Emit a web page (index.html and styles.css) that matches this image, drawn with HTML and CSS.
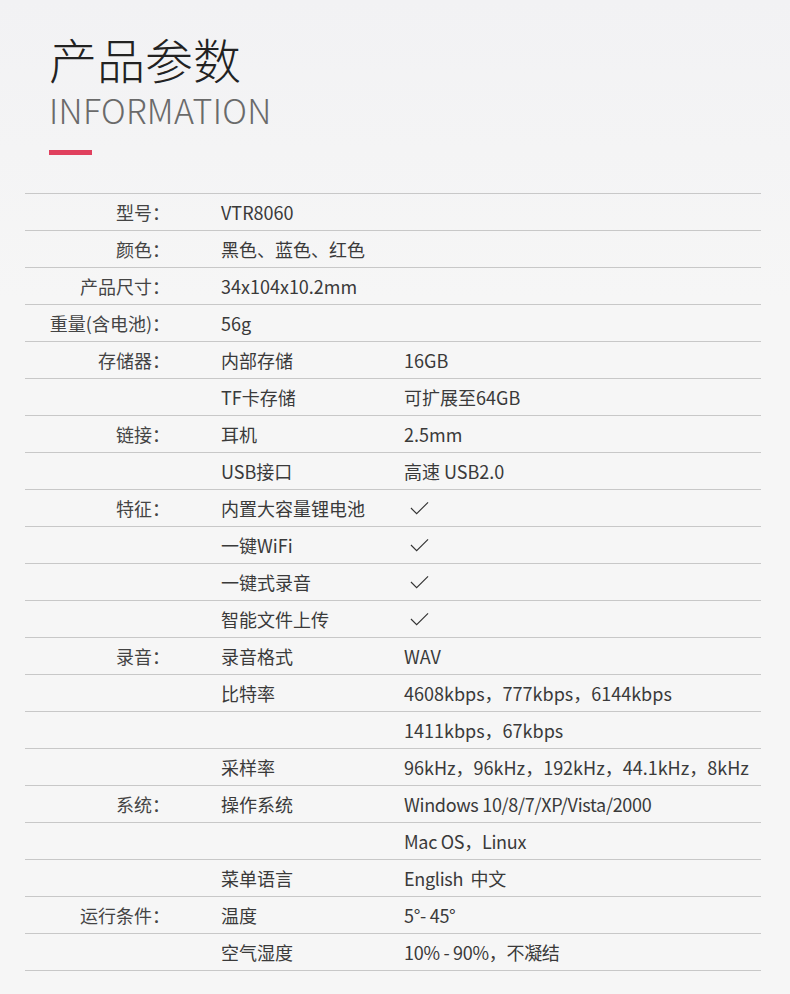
FILE: index.html
```html
<!DOCTYPE html>
<html lang="zh">
    <head>
        <meta charset="UTF-8" />
        <meta name="viewport" content="width=device-width, initial-scale=1.0" />
        <title>产品参数</title>
        <link rel="stylesheet" href="styles.css">
    </head>
    <body>
        <div class="page">
            <div class="head">
                <h1 class="title">产品参数</h1>
                <p class="subtitle">INFORMATION</p>
                <div class="bar"></div>
            </div>

            <div class="spec">
                <div class="row"><span class="label">型号：</span><span class="wide">VTR8060</span></div>
                <div class="row"><span class="label">颜色：</span><span class="wide">黑色、蓝色、红色</span></div>
                <div class="row"><span class="label">产品尺寸：</span><span class="wide">34x104x10.2mm</span></div>
                <div class="row"><span class="label">重量(含电池)：</span><span class="wide">56g</span></div>

                <div class="row"><span class="label">存储器：</span><span class="name">内部存储</span><span class="val">16GB</span></div>
                <div class="row"><span class="label"></span><span class="name">TF卡存储</span><span class="val">可扩展至64GB</span></div>

                <div class="row"><span class="label">链接：</span><span class="name">耳机</span><span class="val">2.5mm</span></div>
                <div class="row"><span class="label"></span><span class="name">USB接口</span><span class="val">高速 USB2.0</span></div>

                <div class="row"><span class="label">特征：</span><span class="name">内置大容量锂电池</span><span class="val"><svg class="check" viewBox="0 0 20 14"><polyline points="1,7 7,13 19,1" /></svg></span></div>
                <div class="row"><span class="label"></span><span class="name">一键WiFi</span><span class="val"><svg class="check" viewBox="0 0 20 14"><polyline points="1,7 7,13 19,1" /></svg></span></div>
                <div class="row"><span class="label"></span><span class="name">一键式录音</span><span class="val"><svg class="check" viewBox="0 0 20 14"><polyline points="1,7 7,13 19,1" /></svg></span></div>
                <div class="row"><span class="label"></span><span class="name">智能文件上传</span><span class="val"><svg class="check" viewBox="0 0 20 14"><polyline points="1,7 7,13 19,1" /></svg></span></div>

                <div class="row"><span class="label">录音：</span><span class="name">录音格式</span><span class="val">WAV</span></div>
                <div class="row"><span class="label"></span><span class="name">比特率</span><span class="val">4608kbps，777kbps，6144kbps</span></div>
                <div class="row"><span class="label"></span><span class="name"></span><span class="val">1411kbps，67kbps</span></div>
                <div class="row"><span class="label"></span><span class="name">采样率</span><span class="val">96kHz，96kHz，192kHz，44.1kHz，8kHz</span></div>

                <div class="row"><span class="label">系统：</span><span class="name">操作系统</span><span class="val narrow">Windows 10/8/7/XP/Vista/2000</span></div>
                <div class="row"><span class="label"></span><span class="name"></span><span class="val narrow">Mac OS，Linux</span></div>
                <div class="row"><span class="label"></span><span class="name">菜单语言</span><span class="val narrow">English&nbsp; 中文</span></div>

                <div class="row"><span class="label">运行条件：</span><span class="name">温度</span><span class="val narrow">5°- 45°</span></div>
                <div class="row"><span class="label"></span><span class="name">空气湿度</span><span class="val narrow">10% - 90%，不凝结</span></div>
            </div>
        </div>
    </body>
</html>
```

FILE: styles.css
```css
* {
    box-sizing: border-box;
}
body {
    margin: 0;
    background: #f6f6f6;
    font-family: "Noto Sans CJK SC", "Noto Sans", sans-serif;
    color: #333;
}
.page {
    width: 790px;
    height: 994px;
    background: linear-gradient(#f2f2f4, #f6f6f6 300px);
    padding: 28px 29px 0 25px;
}
.head {
    padding-left: 24px;
}
.title {
    margin: 0;
    font-size: 48px;
    font-weight: 300;
    line-height: 60px;
    color: #222;
}
.subtitle {
    margin: 0;
    font-size: 34px;
    font-weight: 300;
    line-height: 44px;
    color: #6a6a6a;
    letter-spacing: 0.3px;
}
.bar {
    width: 43px;
    height: 5px;
    background: #e0405e;
    margin-top: 18px;
}
.spec {
    margin-top: 38px;
    border-top: 1px solid #c8c8c8;
}
.row {
    display: grid;
    grid-template-columns: 145px 234px 1fr;
    height: 37px;
    align-items: center;
    border-bottom: 1px solid #c8c8c8;
    font-size: 18px;
    color: #3a3a3a;
}
.label {
    text-align: right;
    color: #444;
}
.name {
    padding-left: 51px;
}
.wide {
    grid-column: 2 / 4;
    padding-left: 51px;
}
.val {
    white-space: nowrap;
}
.narrow {
    letter-spacing: -0.3px;
}
.check {
    display: block;
    width: 19px;
    height: 14px;
    margin-left: 6px;
    fill: none;
    stroke: #333;
    stroke-width: 1.2;
}
```
